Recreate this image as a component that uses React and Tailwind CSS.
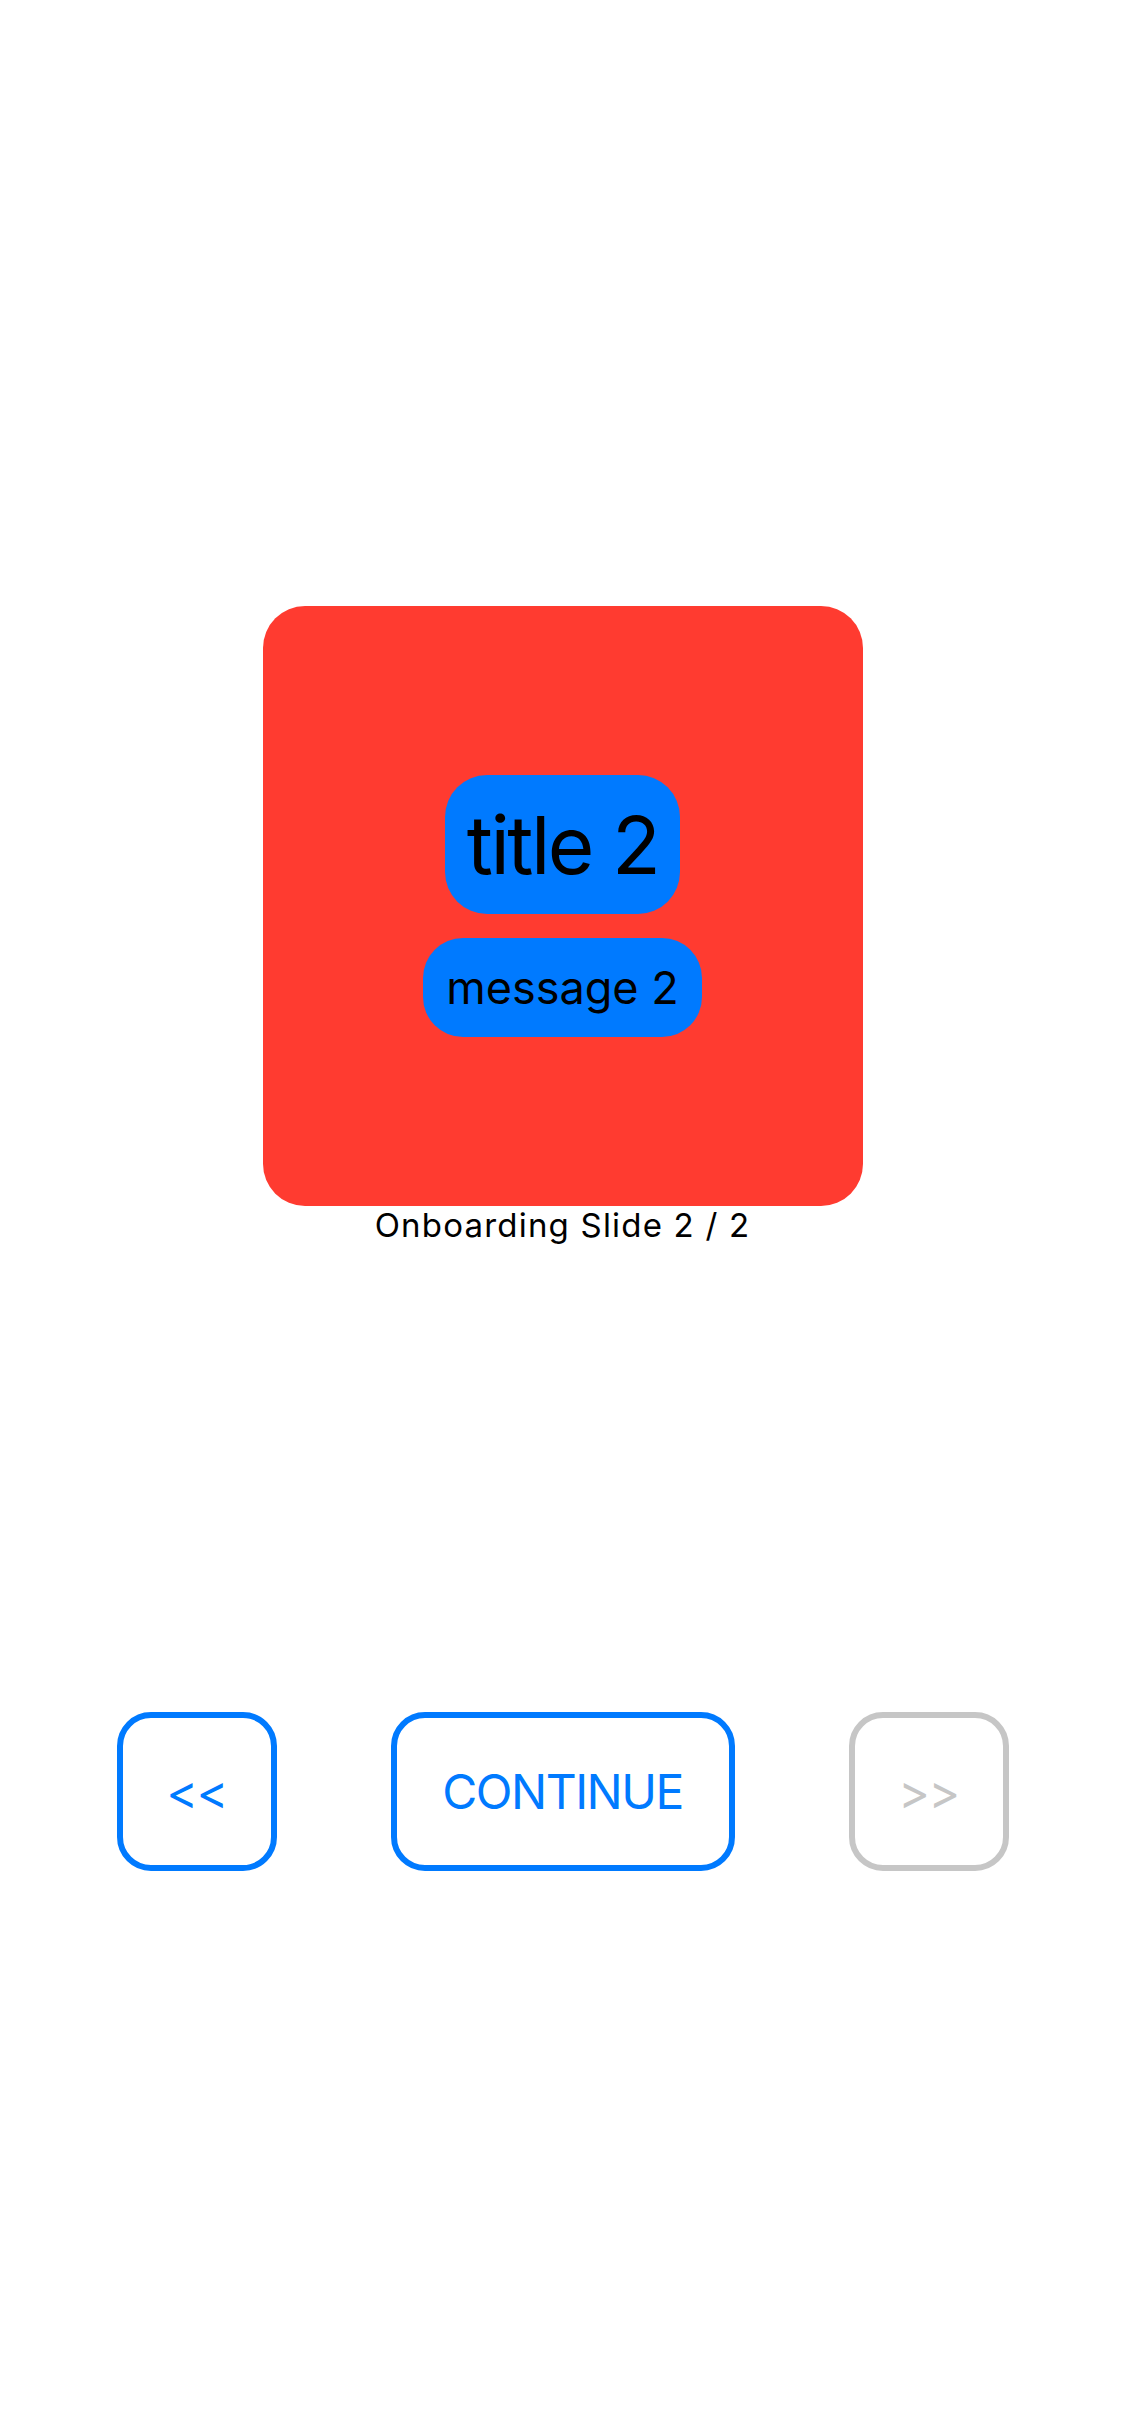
import React from 'react';

const font = { fontFamily: 'Inter, "Noto Sans", sans-serif' };

function NavButton({ label, disabled, wide }) {
  return (
    <button
      type="button"
      disabled={disabled}
      className={
        'flex items-center justify-center h-[159px] rounded-[34px] border-[6px] bg-white ' +
        (wide ? 'w-[344px] ' : 'w-[160px] ') +
        (disabled ? 'border-[#c6c6c6] text-[#c6c6c6]' : 'border-[#007aff] text-[#007aff]')
      }
    >
      <span className="text-[48px] leading-none tracking-[-1.5px]">{label}</span>
    </button>
  );
}

export default function App() {
  return (
    <div className="w-[1125px] h-[2436px] bg-white flex flex-col items-center" style={font}>
      <div className="pt-[606px] flex flex-col items-center">
        <div className="w-[600px] h-[600px] rounded-[42px] bg-[#ff3b30] flex flex-col items-center justify-center gap-[24px]">
          <div className="w-[235px] h-[139px] rounded-[42px] bg-[#007aff] flex items-center justify-center">
            <span className="text-[80px] leading-none text-black tracking-[-2.5px]">title 2</span>
          </div>
          <div className="w-[279px] h-[99px] rounded-[40px] bg-[#007aff] flex items-center justify-center">
            <span className="text-[45px] leading-none text-black">message 2</span>
          </div>
        </div>
        <p className="text-[33px] leading-[38px] text-black tracking-[1.2px]">Onboarding Slide 2 / 2</p>
      </div>

      <div className="mt-[468px] flex items-center justify-center gap-[114px]">
        <NavButton label="<<" />
        <NavButton label="CONTINUE" wide />
        <NavButton label=">>" disabled />
      </div>
    </div>
  );
}
